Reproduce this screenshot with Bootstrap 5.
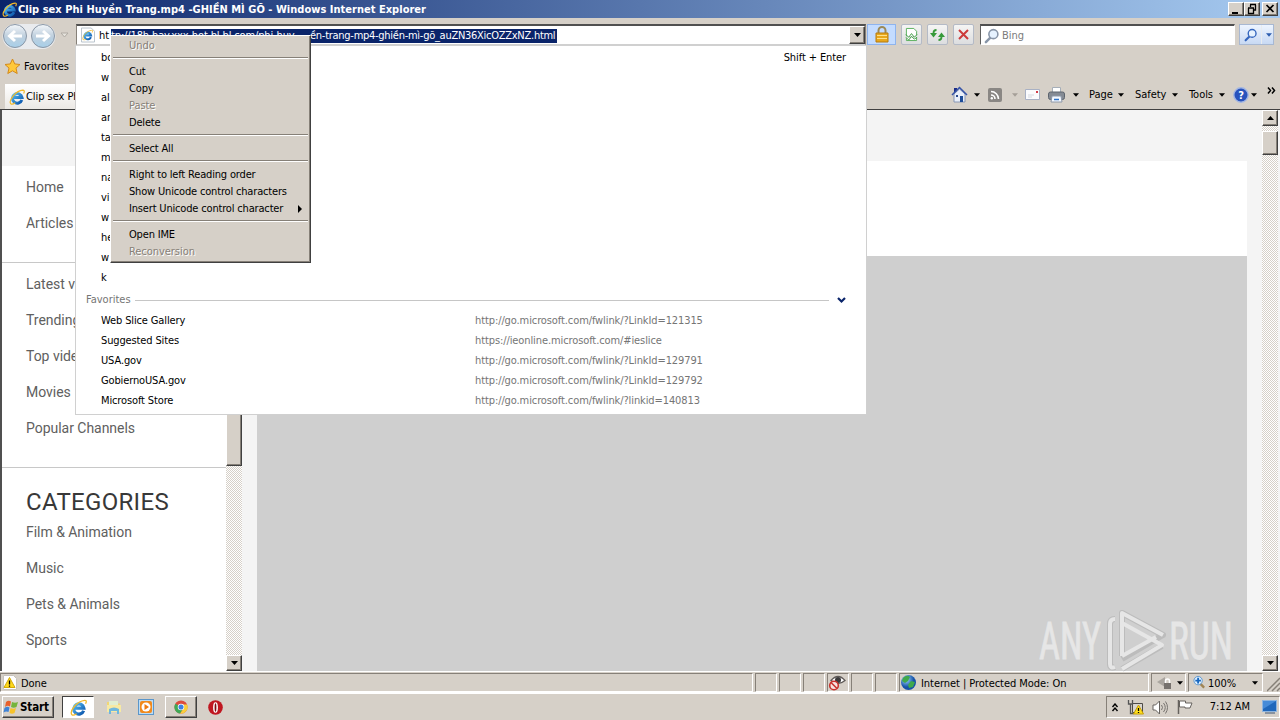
<!DOCTYPE html>
<html lang="vi">
<head>
    <meta charset="UTF-8">
    <title>Windows Internet Explorer</title>
    <link href="https://cdn.jsdelivr.net/npm/bootstrap@5.3.3/dist/css/bootstrap.min.css" rel="stylesheet">
    <script src="https://cdn.jsdelivr.net/npm/bootstrap@5.3.3/dist/js/bootstrap.bundle.min.js"></script>
    <style>
        body { width: 1280px; height: 720px; font: 11px/14px "DejaVu Sans Condensed", "DejaVu Sans", sans-serif; font-stretch: condensed; letter-spacing: -.05px; color: #000; background: #d6d0c8; }
        svg { display: block; flex: none; }

        /* title bar */
        .titlebar { height: 18px; padding: 0 2px; background: linear-gradient(90deg, #0a246a, #a6caf0); color: #fff; }
        .titlebar b { margin-left: 1px; padding-top: 1px; letter-spacing: .02px; }
        .raised { background: #d6d0c8; border: 1px solid; border-color: #fff #404040 #404040 #fff; box-shadow: inset -1px -1px #868078; }
        .winbtn { width: 16px; height: 14px; }
        .winbtn-close { margin-left: 2px; }

        /* toolbars */
        .chrome-top { height: 92px; border-bottom: 1px solid #404040; }
        .addr-row { height: 31px; padding: 6px 0 0 2px; }
        .addr { width: 790px; height: 21px; margin-left: 7px; background: #fff; border: 1px solid #868078; border-top: 2px solid #505050; border-bottom-color: #d0d0d0; }
        .addr-text { margin: 2px 0 0 4px; line-height: 14px; white-space: pre; }
        .addr-scheme { width: 12px; }
        .sel { background: #0a246a; color: #fff; height: 14px; }
        .sel-start { width: 199px; letter-spacing: -.13px; }
        .sel-end { width: 247px; letter-spacing: -.27px; }
        .tools { gap: 5px; margin-left: 1px; }
        .tool { width: 21px; height: 21px; border: 1px solid #b4bac6; border-radius: 2px; background: linear-gradient(#f5f5f4, #dcdddf); }
        .tool-lock { width: 29px; background: #c4dcff; border-color: #8eb4ee; border-radius: 0; }
        .search { width: 255px; height: 21px; margin-left: 6px; padding-top: 1px; background: #fff; border: 1px solid #fff; border-top: 2px solid #505050; border-left: 1px solid #606060; color: #7b7b7b; }
        .search svg { margin: 0 3px; }
        .search-btn { width: 35px; height: 21px; margin-left: 4px; border: 1px solid #a8b8d2; background: linear-gradient(#edf4ff, #c8d9f3); }
        .fav-row { height: 35px; padding-left: 4px; }
        .fav-row span { margin-left: 3px; letter-spacing: .05px; }
        .tab-row { height: 25px; padding-left: 5px; }
        .ie-tab { width: 71px; height: 25px; padding-left: 4px; background: linear-gradient(#fff, #ebe8e4); }
        .ie-tab span { margin-left: 1px; }
        .cmd { display: grid; grid-template-columns: 23px 14px 24px 13px 23px 25px 16px 29px 17px 37px 17px 30px 14px 18px 16px 13px; width: 329px; margin-top: -4px; align-items: center; }

        /* page area */
        .viewport { height: 561px; border-left: 2px solid #505050; background: #f4f4f4; }
        .side { width: 224px; height: 505px; margin-top: 56px; padding-top: 3px; background: #fff; overflow: hidden; font: 14px/36px Roboto, sans-serif; letter-spacing: -.03px; color: #606060; }
        .side hr { margin: 21px 0 3px; border-color: #c8c8c8; opacity: 1; }
        .side h2 { margin: 23px 0 0; font: 24px/23px Roboto, sans-serif; letter-spacing: .32px; color: #383838; }
        .track { width: 16px; background: repeating-conic-gradient(#fff 0 25%, #d6d0c8 0 50%) 0 0 / 2px 2px; }
        .track-side { margin-top: 56px; }
        .track-page { margin-right: 2px; }
        .thumb-side { height: 300px; }
        .thumb-page { height: 24px; margin-top: 5px; }
        .sbtn { width: 16px; height: 16px; }
        .main { width: 990px; margin-left: 15px; }
        .hero { height: 95px; margin-top: 51px; background: #fff; }
        .player { background: #cfcfcf; }

        /* status bar and taskbar */
        .statusbar { height: 21px; border-top: 1px solid #fff; padding-top: 1px; }
        .statusbar span { padding-top: 2px; }
        .pane { width: 22px; height: 19px; border: 1px solid; border-color: #868078 #fff #fff #868078; margin-right: 2px; }
        .pane-done { width: 753px; }
        .pane-done span { margin-left: 3px; }
        .pane-zone { width: 250px; }
        .pane-lock { width: 35px; }
        .pane-zoom { width: 75px; }
        .pane-zoom span { margin-left: 2px; }
        .taskbar { height: 28px; border-top: 2px solid #fff; padding-left: 2px; }
        .start { width: 52px; height: 22px; font-weight: 700; font-size: 11.5px; letter-spacing: -.1px; }
        .task { width: 32px; height: 22px; }
        .task-on { background: #fff; border: 1px solid; border-color: #404040 #fff #fff #404040; }
        .task-chrome { margin: 0 2px 0 3px; }
        .tray { width: 174px; height: 22px; border: 1px solid; border-color: #868078 #fff #fff #868078; }

        /* overlays */
        .suggest { left: 75px; top: 45px; width: 792px; height: 370px; padding-top: 2px; background: #fff; border: 1px solid #d0d0d0; z-index: 2; letter-spacing: -.1px; }
        .suggest .line { height: 20px; line-height: 20px; padding-left: 25px; }
        .suggest .shift { margin-right: 20px; }
        .suggest .url { color: #757575; }
        .suggest .nm { width: 374px; letter-spacing: -.13px; }
        .suggest .group { height: 24px; margin-bottom: -1px; padding: 0 20px 0 10px; color: #757575; letter-spacing: 0; }
        .suggest .rule { height: 1px; margin: 0 8px 0 4px; background: #c6c6c6; }
        .ctx { left: 110px; top: 35px; width: 201px; height: 228px; z-index: 3; padding: 1px 2px; letter-spacing: -.17px; }
        .ctx .mi { height: 17px; line-height: 17px; padding-left: 16px; }
        .ctx .off { color: #868078; text-shadow: 1px 1px #fff; letter-spacing: -.05px; }
        .ctx hr { height: 0; margin: 3px 0 4px; border-top: 1px solid #868078; border-bottom: 1px solid #fff; opacity: 1; box-sizing: content-box; }
        .brand { right: 44px; top: 606px; z-index: 1; overflow: visible; }
    </style>
</head>
<body class="overflow-hidden position-relative">

<svg width="0" height="0" class="position-absolute">
    <defs>
        <linearGradient id="orb" x2="0" y2="1"><stop offset="0" stop-color="#f4f7fa"/><stop offset=".5" stop-color="#c0d0de"/><stop offset="1" stop-color="#a7cfe9"/></linearGradient>
        <linearGradient id="blu" x2="1" y2="1"><stop offset="0" stop-color="#56bdf3"/><stop offset="1" stop-color="#0b55ac"/></linearGradient>
        <radialGradient id="glob" cx=".35" cy=".3"><stop offset="0" stop-color="#9fd8ff"/><stop offset="1" stop-color="#1653a8"/></radialGradient>
    </defs>
    <symbol id="ie" viewBox="0 0 16 16">
        <path d="M12.800 11A4.800 4.800 0 1 1 13 8.500H5" fill="none" stroke="url(#blu)" stroke-width="3"/>
        <path d="M2 15C-1 12 6 2 14 1.200c2 0 1.200 2.300.6 3.300" fill="none" stroke="#f1b92b" stroke-width="1.200"/>
        <path d="M2 15c1.200.6 3-.3 4.200-1.200" fill="none" stroke="#f1b92b" stroke-width="1.200"/>
    </symbol>
    <symbol id="dn" viewBox="0 0 7 4"><path d="M0 0h7L3.500 4z"/></symbol>
    <symbol id="up" viewBox="0 0 7 4"><path d="M0 4h7L3.500 0z"/></symbol>
    <symbol id="lens" viewBox="0 0 16 16">
        <path d="M7 9.500 2 14.500" stroke="currentColor" stroke-width="2.600" stroke-linecap="round"/>
        <circle cx="10" cy="6" r="4.800" fill="#e6f2ff" stroke="currentColor" stroke-width="1.700"/>
    </symbol>
</svg>

<div class="titlebar d-flex align-items-center">
    <svg width="15" height="15"><use href="#ie"/></svg>
    <b class="me-auto text-nowrap">Clip sex Phi Huyền Trang.mp4 -GHIỀN MÌ GÕ - Windows Internet Explorer</b>
    <div class="raised winbtn"><svg width="14" height="12"><path d="M3 9h6v2H3z"/></svg></div>
    <div class="raised winbtn"><svg width="14" height="12"><path d="M5 1.500h6M5.500 2v2M10.500 2v5H9M3 5h6M3.500 5v5.500h5V5" fill="none" stroke="#000" stroke-width="1.300"/></svg></div>
    <div class="raised winbtn winbtn-close"><svg width="14" height="12"><path d="m3.500 2 7 7M10.500 2l-7 7" stroke="#000" stroke-width="1.700"/></svg></div>
</div>

<div class="chrome-top">
    <div class="addr-row d-flex">
        <svg width="54" height="27" viewBox="0 0 54 27">
            <rect x=".5" width="53" height="25" rx="12.500" fill="#e9ebee"/>
            <circle cx="13" cy="12" r="11.500" fill="url(#orb)" stroke="#8a97a6"/>
            <circle cx="41" cy="12" r="11.500" fill="url(#orb)" stroke="#8a97a6"/>
            <path d="M20 12H8m5-5-5.500 5 5.500 5M34 12h12m-5-5 5.500 5-5.500 5" fill="none" stroke="#fff" stroke-width="3"/>
        </svg>
        <svg class="mt-2 ms-1" width="9" height="6"><path d="M1 1h7L4.500 5z" fill="#e6e3dd" stroke="#b0aba4"/></svg>
        <div class="addr d-flex align-items-center">
            <svg class="ms-1" width="14" height="16" viewBox="0 0 15 16"><path d="M.5.5H11L14.500 4v11.500H.5z" fill="#fff" stroke="#b5bfc9"/><use href="#ie" x="1" y="2" width="12" height="12"/></svg>
            <div class="addr-text d-flex me-auto"><span class="addr-scheme">ht</span><span class="sel sel-start">tp://18h.hay.xxx-hot.bl.bl.com/phi-huy</span><span class="sel sel-end">ền-trang-mp4-ghiền-mì-gõ_auZN36XicOZZxNZ.html</span></div>
            <div class="raised d-flex align-items-center justify-content-center sbtn h-100"><svg width="7" height="4"><use href="#dn"/></svg></div>
        </div>
        <div class="tools d-flex">
            <div class="tool tool-lock d-flex align-items-center justify-content-center">
                <svg width="16" height="17" viewBox="0 0 16 17"><path d="M4.500 8V4.500a3.500 3.500 0 0 1 7 0V8" fill="none" stroke="#9b8a58" stroke-width="2"/><path d="M2 7h12v9H2z" fill="#e8a81c" stroke="#b67a10"/><path d="M3 9.500h10M3 12.500h10" stroke="#ffe08a"/></svg>
            </div>
            <div class="tool d-flex align-items-center justify-content-center">
                <svg width="13" height="15" viewBox="0 0 14 16"><path d="M1.500 10V1.500h8l3 3V9M1.500 12v2.500h11V11" fill="#fff" stroke="#55ad59"/><path d="m1 8 3 3 3-4 3 4 3-3M1 11l3 3 3-4 3 3 3-2" fill="none" stroke="#399a3e"/></svg>
            </div>
            <div class="tool d-flex align-items-center justify-content-center">
                <svg width="15" height="14" viewBox="0 0 15 14"><path d="M6.500 2q-3 0-3 3v1M8.500 12q3 0 3-3V8" fill="none" stroke="#369a3a" stroke-width="1.800"/><path d="M0 5h7L3.500 9.500zM8 9h7l-3.500-4.500z" fill="#369a3a"/></svg>
            </div>
            <div class="tool d-flex align-items-center justify-content-center">
                <svg width="13" height="13"><path d="m2 2 9 9M11 2l-9 9" stroke="#cc3b3b" stroke-width="2"/></svg>
            </div>
        </div>
        <div class="search d-flex align-items-center">
            <svg width="15" height="16" color="#8895a8"><use href="#lens"/></svg>Bing
        </div>
        <div class="search-btn d-flex align-items-center">
            <svg class="ms-1" width="13" height="14" color="#3465bd"><use href="#lens"/></svg>
            <div class="border-start border-secondary-subtle h-100 ms-1 ps-1 d-flex align-items-center"><svg width="6" height="4" fill="#2d5dae"><use href="#dn"/></svg></div>
        </div>
    </div>

    <div class="fav-row d-flex align-items-center">
        <svg width="17" height="17" viewBox="0 0 17 17"><path d="m8.500 1 2.200 4.900 5.300.6-4 3.600 1.200 5.400-4.700-2.700-4.700 2.700L5 10.100 1 6.500l5.300-.6z" fill="#ffc83a" stroke="#d48a1b"/></svg>
        <span>Favorites</span>
    </div>

    <div class="tab-row d-flex justify-content-between">
        <div class="ie-tab d-flex align-items-center"><svg width="16" height="16"><use href="#ie"/></svg><span class="text-nowrap overflow-hidden">Clip sex Phi</span></div>
        <div class="cmd">
            <svg width="17" height="17" viewBox="0 0 17 17"><path d="M3 2h3v4H3z" fill="#1b2c88"/><path d="M3 8v8h11V8L8.500 3z" fill="#e9effa" stroke="#8796b4"/><path d="m1 9 7.500-7.500L16 9" fill="none" stroke="#3553a8" stroke-width="1.500"/><path d="M9 10h3v6H9z" fill="#1d4c99"/><path d="M5 9h2v2H5z" fill="#2b4a8c"/></svg>
            <svg width="6" height="4"><use href="#dn"/></svg>
            <svg width="14" height="14" viewBox="0 0 14 14"><rect width="14" height="14" rx="2" fill="#8a8784"/><path d="M3 7a4 4 0 0 1 4 4M3 3.500A7.500 7.500 0 0 1 10.500 11" fill="none" stroke="#fff" stroke-width="1.600"/><circle cx="3.800" cy="10.300" r="1.200" fill="#fff"/></svg>
            <svg width="6" height="4" fill="#a59f98"><use href="#dn"/></svg>
            <svg width="15" height="11"><path d="M.5.5h14v10H.5z" fill="#fbfbfd" stroke="#a9b1c4"/><path d="M11 2h2v2h-2z" fill="#d33c48"/><path d="M3 6h6M3 8h4" stroke="#d5d8e0"/></svg>
            <svg width="17" height="16" viewBox="0 0 17 16"><path d="M4.500.5h8V6h-8z" fill="#fff" stroke="#a6aeb8"/><rect x=".5" y="5" width="16" height="7.500" rx="2" fill="#858b94" stroke="#5d646e"/><path d="M4 9h9l1 6H3z" fill="#f4f8ff" stroke="#8c97a8"/><path d="M6 12.500h5" stroke="#2e74c9" stroke-width="1.500"/></svg>
            <svg width="6" height="4"><use href="#dn"/></svg>
            <span>Page</span>
            <svg width="6" height="4"><use href="#dn"/></svg>
            <span>Safety</span>
            <svg width="6" height="4"><use href="#dn"/></svg>
            <span>Tools</span>
            <svg width="6" height="4"><use href="#dn"/></svg>
            <svg width="16" height="16" viewBox="0 0 16 16"><circle cx="8" cy="8" r="7.200" fill="#2953bd" stroke="#a3b6e3" stroke-width="1.400"/><text x="8" y="12" font-size="11" font-weight="700" text-anchor="middle" fill="#fff">?</text></svg>
            <svg width="6" height="4"><use href="#dn"/></svg>
            <svg class="mb-2" width="9" height="7"><path d="m1 .5 2.500 3L1 6.500M5 .5l2.500 3L5 6.500" fill="none" stroke="#000" stroke-width="1.500"/></svg>
        </div>
    </div>
</div>

<div class="viewport d-flex">
    <div class="side">
        <div class="ps-4">Home</div>
        <div class="ps-4">Articles</div>
        <hr>
        <div class="ps-4">Latest videos</div>
        <div class="ps-4">Trending</div>
        <div class="ps-4">Top videos</div>
        <div class="ps-4">Movies</div>
        <div class="ps-4">Popular Channels</div>
        <hr>
        <h2 class="ps-4">CATEGORIES</h2>
        <div class="ps-4">Film &amp; Animation</div>
        <div class="ps-4">Music</div>
        <div class="ps-4">Pets &amp; Animals</div>
        <div class="ps-4">Sports</div>
    </div>
    <div class="track track-side d-flex flex-column justify-content-between">
        <div class="raised thumb-side"></div>
        <div class="raised sbtn d-flex align-items-center justify-content-center"><svg width="7" height="4"><use href="#dn"/></svg></div>
    </div>
    <div class="main d-flex flex-column">
        <div class="hero"></div>
        <div class="player flex-grow-1"></div>
    </div>
    <div class="track track-page ms-auto d-flex flex-column">
        <div class="raised sbtn d-flex align-items-center justify-content-center"><svg width="7" height="4"><use href="#up"/></svg></div>
        <div class="raised thumb-page"></div>
        <div class="raised sbtn mt-auto d-flex align-items-center justify-content-center"><svg width="7" height="4"><use href="#dn"/></svg></div>
    </div>
</div>

<div class="statusbar d-flex">
    <div class="pane pane-done d-flex align-items-center">
        <svg width="17" height="15" viewBox="-2 0 17 15"><path d="M.5.5h10l3 3v11H.5z" fill="#fff" stroke="#c7c3bd"/><path d="m6.500 2.500 5.500 10H1z" fill="#ffd91a" stroke="#d3a90b"/><path d="M6.500 5.500v4M6.500 10.500v1.300" stroke="#000" stroke-width="1.300"/></svg>
        <span>Done</span>
    </div>
    <div class="pane"></div>
    <div class="pane"></div>
    <div class="pane"></div>
    <div class="pane">
        <svg width="20" height="17" viewBox="0 0 20 17"><path d="M3 6.500q7-8 14 0-7 6-14 0z" fill="#fff" stroke="#5f5a58" stroke-width="1.300"/><circle cx="10" cy="6" r="3" fill="#3b3a3b"/><circle cx="6" cy="11.500" r="4.300" fill="#f7e4e2" stroke="#c9332e" stroke-width="1.600"/><path d="m3 8.500 6 6" stroke="#c9332e" stroke-width="1.600"/></svg>
    </div>
    <div class="pane"></div>
    <div class="pane"></div>
    <div class="pane pane-zone d-flex align-items-center">
        <svg width="17" height="17" viewBox="0 0 17 17"><circle cx="8.500" cy="8.500" r="7.500" fill="url(#glob)"/><path d="M3 4q4-4 7-1L8 7 5 9 2 7zM11 7l4 1-2 5-4 1-1-3z" fill="#40a94b"/></svg>
        <span class="ms-1">Internet | Protected Mode: On</span>
    </div>
    <div class="pane pane-lock d-flex align-items-center">
        <svg class="ms-1" width="17" height="14" viewBox="0 0 17 14"><path d="m1 6 8-5v10z" fill="#aaa59f"/><path d="M8 7h7v6H8z" fill="#77726e"/><path d="M9.500 7V5a2 2 0 0 1 4 0v2" fill="none" stroke="#fff" stroke-width="1.500"/></svg>
        <svg class="ms-1" width="6" height="4"><use href="#dn"/></svg>
    </div>
    <div class="pane pane-zoom d-flex align-items-center">
        <svg class="ms-1" width="13" height="15" viewBox="0 0 14 15"><path d="m8 9 4 4" stroke="#a08454" stroke-width="2.500"/><circle cx="5.500" cy="5.500" r="4.500" fill="#dff0ff" stroke="#5b94cd"/><path d="M5.500 2.500v6M2.500 5.500h6" stroke="#1767c0" stroke-width="2"/></svg>
        <span class="me-auto">100%</span>
        <svg class="me-1" width="6" height="4"><use href="#dn"/></svg>
    </div>
    <svg class="ms-auto mt-1" width="13" height="15"><path d="M0 14 13 1M5 14l8-8M10 14l3-3" stroke="#868078" stroke-width="1.500"/></svg>
</div>

<div class="taskbar d-flex align-items-center">
    <div class="raised start d-flex align-items-center">
        <svg width="17" height="16" viewBox="0 0 17 16"><path d="M3 3q2.500-2 5-.5L7 7.500Q4.500 6 2 8z" fill="#e8612c"/><path d="M9 3q3 1.500 6 0l-1.500 5q-3 1.500-5.500 0z" fill="#75b43c"/><path d="M1.500 9q2.500-2 5-.5L5.500 13Q3 12 .5 13.500z" fill="#3f83d6"/><path d="M7.500 9q3 1.500 5.500 0l-1.500 5q-2.500 1.500-5 0z" fill="#f7c32b"/></svg>Start
    </div>
    <div class="task task-on d-flex align-items-center justify-content-center ms-2"><svg width="17" height="17"><use href="#ie"/></svg></div>
    <div class="task d-flex align-items-center justify-content-center ms-1">
        <svg width="16" height="15" viewBox="0 0 16 15"><path d="M1 2h5l1 1.500h7V12H1z" fill="#f2d675"/><path d="M3 1h9v5H3z" fill="#e1eed0"/><path d="M1 5h14v7H1z" fill="#f7e9a3"/><path d="M3 14V9q5-3 10 0v5h-2v-3H5v3z" fill="#6fb7de"/></svg>
    </div>
    <div class="task d-flex align-items-center justify-content-center">
        <svg width="16" height="16" viewBox="0 0 16 16"><rect x=".5" y=".5" width="15" height="15" fill="#bcdcf4" stroke="#5b96ca"/><rect x="2" y="2" width="12" height="12" rx="2" fill="#f18a1c"/><circle cx="8" cy="8" r="4.500" fill="#fff"/><path d="m6.500 5 4.500 3-4.500 3z" fill="#ee7a10"/></svg>
    </div>
    <div class="raised task task-chrome d-flex align-items-center justify-content-center">
        <svg width="14" height="14" viewBox="0 0 16 16"><circle cx="8" cy="8" r="7.500" fill="#dd4b3e"/><path d="M8 8 1.500 4.200A7.500 7.500 0 0 0 7 15.500l3.500-5.500z" fill="#3faa57"/><path d="M8 5h7a7.500 7.500 0 0 1-8 10.500l4-6z" fill="#f9cf3c"/><circle cx="8" cy="8" r="3.700" fill="#fff"/><circle cx="8" cy="8" r="2.900" fill="#3e80e4"/></svg>
    </div>
    <div class="task d-flex align-items-center justify-content-center">
        <svg width="15" height="15" viewBox="0 0 15 15"><circle cx="7.500" cy="7.500" r="7.300" fill="#c01620"/><ellipse cx="7.500" cy="7.500" rx="2.400" ry="5.300" fill="#fff"/><ellipse cx="7.500" cy="7.500" rx=".9" ry="4.200" fill="#7c0c12"/></svg>
    </div>
    <div class="tray d-flex align-items-center ms-auto">
        <svg class="ms-1 me-2" width="8" height="9"><path d="m1.500 4 2.500-3 2.500 3M1.500 8 4 5l2.500 3" fill="none" stroke="#000" stroke-width="1.400"/></svg>
        <svg width="17" height="16" viewBox="0 0 17 16"><path d="M5.500 4.500h10v9h-10z" fill="#d8d5d0" stroke="#4d4a47"/><path d="M1.500 1v4h4V1M3.500 5v9.500H7" fill="none" stroke="#555" stroke-width="1.300"/><path d="m11.500 6 5 9h-10z" fill="#ffdf1b" stroke="#c69d08"/><path d="M11.500 9v3M11.500 13v1" stroke="#000" stroke-width="1.300"/></svg>
        <svg class="ms-2" width="17" height="15" viewBox="0 0 16 15"><path d="M.5 5H3l4-4v13l-4-4H.5z" fill="#fff" stroke="#66625e"/><path d="M9 5q2 2.500 0 5M11 3q3.500 4.500 0 9M13 1.500q4 6 0 12" fill="none" stroke="#77736f"/></svg>
        <svg class="ms-2" width="17" height="16" viewBox="0 0 17 16"><path d="M1.500 1v14" stroke="#66625e" stroke-width="1.500"/><path d="M2.500 2h6v2h6.500L13 9H8V8H2.500z" fill="#fff" stroke="#66625e"/></svg>
        <span class="ms-auto me-2 text-nowrap">7:12 AM</span>
        <svg class="ms-1" width="17" height="14" viewBox="0 0 17 14"><rect x=".5" y=".5" width="14" height="11" fill="#1f67bb" stroke="#8fb5df"/><path d="M1 1h13L1 9z" fill="#468bd8"/><path d="M3 13h10" stroke="#3c5777"/></svg>
    </div>
</div>

<div class="suggest position-absolute">
    <div class="d-flex line"><span class="me-auto">bo</span><span class="shift">Shift + Enter</span></div>
    <div class="line">w</div>
    <div class="line">al</div>
    <div class="line">an</div>
    <div class="line">ta</div>
    <div class="line">m</div>
    <div class="line">na</div>
    <div class="line">vi</div>
    <div class="line">w</div>
    <div class="line">he</div>
    <div class="line">w</div>
    <div class="line">k</div>
    <div class="group d-flex align-items-center">Favorites<span class="rule flex-grow-1"></span>
        <svg width="9" height="7"><path d="m1 1 3.500 3.500L8 1" fill="none" stroke="#0a246a" stroke-width="2.200"/></svg>
    </div>
    <div class="line d-flex"><span class="nm">Web Slice Gallery</span><span class="url">http://go.microsoft.com/fwlink/?LinkId=121315</span></div>
    <div class="line d-flex"><span class="nm">Suggested Sites</span><span class="url">https://ieonline.microsoft.com/#ieslice</span></div>
    <div class="line d-flex"><span class="nm">USA.gov</span><span class="url">http://go.microsoft.com/fwlink/?LinkId=129791</span></div>
    <div class="line d-flex"><span class="nm">GobiernoUSA.gov</span><span class="url">http://go.microsoft.com/fwlink/?LinkId=129792</span></div>
    <div class="line d-flex"><span class="nm">Microsoft Store</span><span class="url">http://go.microsoft.com/fwlink/?linkid=140813</span></div>
</div>

<div class="ctx raised position-absolute">
    <div class="mi off">Undo</div>
    <hr>
    <div class="mi">Cut</div>
    <div class="mi">Copy</div>
    <div class="mi off">Paste</div>
    <div class="mi">Delete</div>
    <hr>
    <div class="mi">Select All</div>
    <hr>
    <div class="mi">Right to left Reading order</div>
    <div class="mi">Show Unicode control characters</div>
    <div class="mi d-flex align-items-center justify-content-between">Insert Unicode control character<svg class="me-1" width="6" height="8"><path d="M0 0v8l4-4z"/></svg></div>
    <hr>
    <div class="mi">Open IME</div>
    <div class="mi off">Reconversion</div>
</div>

<svg class="brand position-absolute" width="198" height="68" viewBox="0 0 198 68" font-family="Roboto, sans-serif" font-size="51" letter-spacing="0" fill="#e6e6e6">
    <g stroke="#e6e6e6" stroke-width=".8">
        <text x="1" y="53" textLength="62" lengthAdjust="spacingAndGlyphs">ANY</text>
        <text x="131" y="53" textLength="64" lengthAdjust="spacingAndGlyphs">RUN</text>
    </g>
    <g fill="none" stroke="#bcbcbc" stroke-width="6" stroke-linejoin="round">
        <path d="M77 13q-5 0-5 5v40q0 5 5 3"/>
        <path d="M84 50V7l41 22-41 24M84 63l40-23"/>
    </g>
    <g fill="none" stroke="#e6e6e6" stroke-width="4" stroke-linejoin="round">
        <path d="M77 13q-5 0-5 5v40q0 5 5 3"/>
        <path d="M84 50V7l41 22M84 17l40 22-40 24M84 50l34-19"/>
    </g>
</svg>

</body>
</html>
